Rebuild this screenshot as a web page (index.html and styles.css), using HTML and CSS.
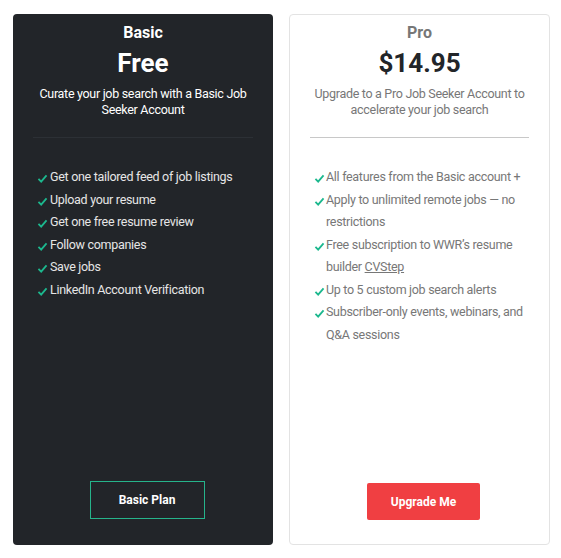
FILE: index.html
```html
<!DOCTYPE html>
<html>
<head>
<meta charset="utf-8">
<link rel="stylesheet" href="styles.css">
</head>
<body>
<div class="plans">
  <div class="card card-basic">
    <div class="head">
      <div class="name">Basic</div>
      <div class="price">Free</div>
      <div class="desc">Curate your job search with a Basic Job Seeker Account</div>
    </div>
    <div class="divider"></div>
    <ul class="features">
      <li><svg class="check" viewBox="0 0 12 10"><path d="M1.5 5.5 L4.5 8.5 L10.5 1.5"/></svg><span>Get one tailored feed of job listings</span></li>
      <li><svg class="check" viewBox="0 0 12 10"><path d="M1.5 5.5 L4.5 8.5 L10.5 1.5"/></svg><span>Upload your resume</span></li>
      <li><svg class="check" viewBox="0 0 12 10"><path d="M1.5 5.5 L4.5 8.5 L10.5 1.5"/></svg><span>Get one free resume review</span></li>
      <li><svg class="check" viewBox="0 0 12 10"><path d="M1.5 5.5 L4.5 8.5 L10.5 1.5"/></svg><span>Follow companies</span></li>
      <li><svg class="check" viewBox="0 0 12 10"><path d="M1.5 5.5 L4.5 8.5 L10.5 1.5"/></svg><span>Save jobs</span></li>
      <li><svg class="check" viewBox="0 0 12 10"><path d="M1.5 5.5 L4.5 8.5 L10.5 1.5"/></svg><span>LinkedIn Account Verification</span></li>
    </ul>
    <div class="foot">
      <a class="btn btn-outline">Basic Plan</a>
    </div>
  </div>
  <div class="card card-pro">
    <div class="head">
      <div class="name">Pro</div>
      <div class="price">$14.95</div>
      <div class="desc">Upgrade to a Pro Job Seeker Account to accelerate your job search</div>
    </div>
    <div class="divider"></div>
    <ul class="features">
      <li><svg class="check" viewBox="0 0 12 10"><path d="M1.5 5.5 L4.5 8.5 L10.5 1.5"/></svg><span>All features from the Basic account +</span></li>
      <li><svg class="check" viewBox="0 0 12 10"><path d="M1.5 5.5 L4.5 8.5 L10.5 1.5"/></svg><span>Apply to unlimited remote jobs — no restrictions</span></li>
      <li><svg class="check" viewBox="0 0 12 10"><path d="M1.5 5.5 L4.5 8.5 L10.5 1.5"/></svg><span>Free subscription to WWR’s resume builder <a class="link">CVStep</a></span></li>
      <li><svg class="check" viewBox="0 0 12 10"><path d="M1.5 5.5 L4.5 8.5 L10.5 1.5"/></svg><span>Up to 5 custom job search alerts</span></li>
      <li><svg class="check" viewBox="0 0 12 10"><path d="M1.5 5.5 L4.5 8.5 L10.5 1.5"/></svg><span>Subscriber-only events, webinars, and Q&amp;A sessions</span></li>
    </ul>
    <div class="foot">
      <a class="btn btn-red">Upgrade Me</a>
    </div>
  </div>
</div>
</body>
</html>
```
FILE: styles.css
```css
* { box-sizing: border-box; }
body {
  margin: 0;
  background: #fff;
  font-family: Roboto, "Liberation Sans", sans-serif;
}
.plans {
  display: flex;
  gap: 16px;
  padding: 14px 0 13px 13px;
}
.card {
  flex: none;
  width: 260px;
  height: 531px;
  border-radius: 4px;
  padding: 9px 20px 26px;
  display: flex;
  flex-direction: column;
}
.card-basic {
  background: #222529;
  color: #fff;
}
.card-pro {
  width: 261px;
  background: #fff;
  border: 1px solid #e3e3e3;
  color: #777;
  padding-top: 8px;
  padding-bottom: 24px;
}
.head {
  text-align: center;
}
.name {
  font-size: 16px;
  font-weight: 700;
  line-height: 20px;
}
.price {
  font-size: 26px;
  font-weight: 700;
  line-height: 32px;
  margin-top: 4px;
}
.card-pro .name { color: #777; }
.card-pro .price { color: #222529; }
.desc {
  font-size: 12.5px;
  line-height: 16px;
  margin-top: 7px;
  letter-spacing: -0.3px;
}
.divider {
  height: 1px;
  margin-top: 19px;
  background: #2c3035;
}
.card-pro .divider { background: #c8c8c8; }
.features {
  list-style: none;
  margin: 28px 0 0;
  padding: 0 0 0 4px;
}
.features li {
  display: flex;
  align-items: flex-start;
  font-size: 12.5px;
  line-height: 22.5px;
  letter-spacing: -0.3px;
}
.card-basic .features li { color: #e6e6e6; }
.check {
  width: 11px;
  height: 9px;
  flex: none;
  margin: 8px 2px 0 0;
  fill: none;
  stroke: #1cb88e;
  stroke-width: 2;
}
.card-pro .check { margin-right: 1px; }
.link {
  color: #777;
  text-decoration: underline;
  text-underline-offset: 1px;
}
.foot {
  margin-top: auto;
  display: flex;
  justify-content: center;
  padding-left: 8px;
}
.btn {
  display: flex;
  align-items: center;
  justify-content: center;
  height: 38px;
  font-size: 12px;
  font-weight: 700;
  color: #fff;
}
.btn-outline {
  width: 115px;
  border: 1px solid #26b48b;
}
.btn-red {
  width: 113px;
  height: 37px;
  background: #f03f42;
  border-radius: 2px;
}
```
